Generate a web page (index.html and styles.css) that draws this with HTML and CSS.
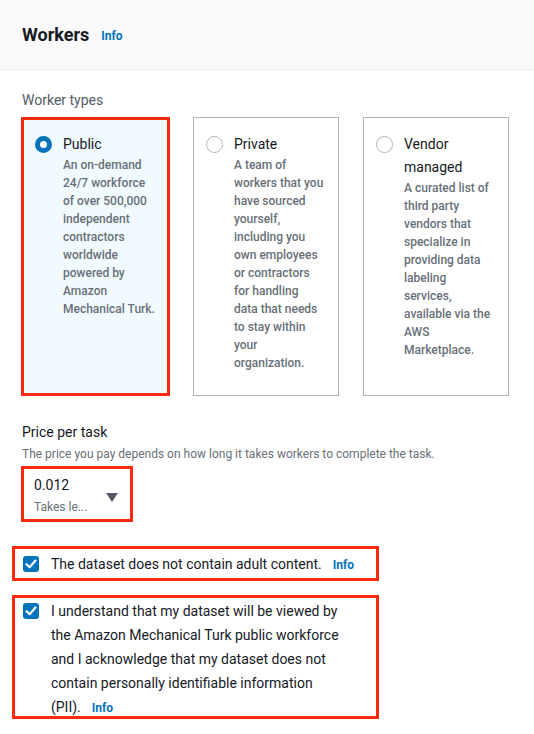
FILE: index.html
```html
<!DOCTYPE html>
<html>
<head>
<meta charset="utf-8">
<link rel="stylesheet" href="styles.css">
</head>
<body>
<header class="header">
  <h2 class="title">Workers</h2>
  <a class="info">Info</a>
</header>
<main class="content">
  <div class="field-label">Worker types</div>
  <div class="tiles">
    <div class="tile tile-selected">
      <span class="radio radio-on"></span>
      <div class="tile-body">
        <div class="tile-label">Public</div>
        <div class="tile-desc">An on-demand 24/7 workforce of over 500,000 independent contractors worldwide powered by Amazon Mechanical Turk.</div>
      </div>
    </div>
    <div class="tile">
      <span class="radio"></span>
      <div class="tile-body">
        <div class="tile-label">Private</div>
        <div class="tile-desc">A team of workers that you have sourced yourself, including you own employees or contractors for handling<br>data that needs to stay within<br>your organization.</div>
      </div>
    </div>
    <div class="tile">
      <span class="radio"></span>
      <div class="tile-body">
        <div class="tile-label">Vendor managed</div>
        <div class="tile-desc">A curated list of third party vendors that specialize in providing data labeling services, available via the AWS Marketplace.</div>
      </div>
    </div>
  </div>

  <div class="price-label">Price per task</div>
  <div class="price-desc">The price you pay depends on how long it takes workers to complete the task.</div>
  <div class="select">
    <div class="select-text">
      <div class="select-value">0.012</div>
      <div class="select-sub">Takes le...</div>
    </div>
    <svg class="caret" width="12" height="9" viewBox="0 0 12 9"><path d="M0 0 H12 L6 9 Z" fill="#545b64"/></svg>
  </div>

  <div class="check-row check-single">
    <span class="checkbox"><svg width="16" height="16" viewBox="0 0 16 16"><path d="M3.5 8.2 L6.6 11.2 L12.5 4.6" fill="none" stroke="#fff" stroke-width="2.2" stroke-linecap="round" stroke-linejoin="round"/></svg></span>
    <span class="check-text">The dataset does not contain adult content.<a class="info info-inline">Info</a></span>
  </div>

  <div class="check-row check-multi">
    <span class="checkbox"><svg width="16" height="16" viewBox="0 0 16 16"><path d="M3.5 8.2 L6.6 11.2 L12.5 4.6" fill="none" stroke="#fff" stroke-width="2.2" stroke-linecap="round" stroke-linejoin="round"/></svg></span>
    <span class="check-text">I understand that my dataset will be viewed by the Amazon Mechanical Turk public workforce and I acknowledge that my dataset does not contain personally identifiable information <span class="nowrap">(PII).<a class="info info-inline">Info</a></span></span>
  </div>
</main>
</body>
</html>
```
FILE: styles.css
```css
* { box-sizing: border-box; }
html, body { margin: 0; padding: 0; background: #fff; }
body {
  font-family: Roboto, "Liberation Sans", sans-serif;
  color: #16191f;
  width: 534px;
  height: 734px;
  overflow: hidden;
}
.header {
  height: 70px;
  background: #fafafa;
  border-bottom: 1px solid #eaeded;
  display: flex;
  align-items: center;
  padding: 0 22px;
  gap: 12px;
}
.title {
  margin: 0;
  font-size: 18px;
  font-weight: 700;
  color: #16191f;
}
.info {
  color: #0073bb;
  font-size: 12px;
  font-weight: 700;
  padding-top: 3px;
}
.content {
  padding: 20px 22px 0 21px;
}
.field-label {
  font-size: 14px;
  line-height: 20px;
  color: #545b64;
  padding-left: 1px;
}
.tiles {
  display: flex;
  gap: 23px;
  margin-top: 7px;
}
.tile {
  width: 146px;
  height: 279px;
  border: 1px solid #aab7b8;
  padding: 15px 12px 0 12px;
  display: flex;
  gap: 11px;
}
.tile + .tile + .tile { margin-left: 1px; }
.tile-selected {
  width: 149px;
  border: 3px solid #fe2a0b;
  background: #f1faff;
  padding: 13px 11px 0 11px;
}
.radio {
  flex: none;
  width: 17px;
  height: 17px;
  border-radius: 50%;
  border: 1.5px solid #aab7b8;
  background: #fff;
  margin-top: 3px;
}
.radio-on {
  border: 5px solid #0073bb;
}
.tile-body { flex: 1; min-width: 0; }
.tile-label {
  font-size: 14px;
  line-height: 23px;
  color: #16191f;
}
.tile-desc {
  font-size: 12px;
  line-height: 18px;
  color: #687078;
  font-weight: 500;
}
.price-label {
  margin-top: 26px;
  font-size: 14px;
  line-height: 20px;
  color: #16191f;
  padding-left: 1px;
}
.price-desc {
  margin-top: 3px;
  font-size: 12px;
  line-height: 18px;
  color: #687078;
  padding-left: 1px;
}
.select {
  margin-top: 3px;
  width: 112px;
  height: 56px;
  border: 3px solid #fe2a0b;
  padding: 6px 12px 0 10px;
  display: flex;
  align-items: flex-start;
  justify-content: space-between;
}
.select-value {
  font-size: 14px;
  line-height: 20px;
  color: #16191f;
}
.select-sub {
  margin-top: 3px;
  font-size: 12px;
  line-height: 18px;
  color: #687078;
}
.caret { margin-top: 18px; }
.check-row {
  display: flex;
  gap: 12px;
  border: 3px solid #fe2a0b;
  width: 367px;
  margin-left: -9px;
  padding: 0 8px;
}
.check-single {
  margin-top: 24px;
  height: 35px;
  align-items: center;
}
.check-multi {
  margin-top: 14px;
  height: 124px;
  padding-top: 1px;
  padding-right: 20px;
}
.checkbox {
  flex: none;
  width: 16px;
  height: 16px;
  border-radius: 3px;
  background: #0073bb;
  display: block;
}
.checkbox svg { display: block; }
.check-multi .checkbox { margin-top: 4px; }
.check-text {
  font-size: 14px;
  line-height: 24px;
  color: #16191f;
}
.nowrap { white-space: nowrap; }
.info-inline {
  display: inline-block;
  line-height: 16px;
  margin-left: 11px;
  font-size: 12px;
  padding-top: 0;
}
```
